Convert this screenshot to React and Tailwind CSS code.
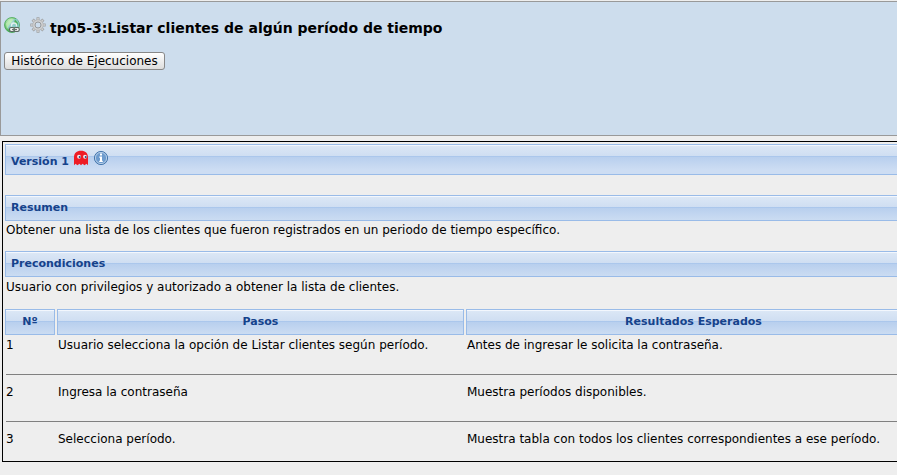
import React from 'react';

const BAR =
  'border border-[#99bbe8] shadow-[inset_0_1px_0_#f3f7fd] text-[11px] font-bold text-[#15428b] whitespace-nowrap';
const BAR_SHORT =
  'h-[26px] leading-6 bg-[linear-gradient(to_bottom,#dfe9f8_0px,#dae6f5_2px,#cfdef2_11px,#abc7ec_11px,#abc7ec_12px,#b8cfee_12px,#cbdcf2_24px)]';
const BAR_TALL =
  'h-[31px] bg-[linear-gradient(to_bottom,#dfe9f8_0px,#dae6f5_2px,#cfdef2_11px,#abc7ec_11px,#abc7ec_12px,#b8cfee_12px,#cdddf3_25px,#cdddf3_29px)]';

const steps = [
  ['1', 'Usuario selecciona la opción de Listar clientes según período.', 'Antes de ingresar le solicita la contraseña.'],
  ['2', 'Ingresa la contraseña', 'Muestra períodos disponibles.'],
  ['3', 'Selecciona período.', 'Muestra tabla con todos los clientes correspondientes a ese período.'],
];

function LinkGlobe() {
  return (
    <svg className="h-4 w-4 shrink-0" viewBox="0 0 16 16">
      <defs>
        <radialGradient id="globe" cx=".4" cy=".3" r=".75">
          <stop offset="0" stopColor="#d9f5d5" />
          <stop offset=".5" stopColor="#83cf80" />
          <stop offset="1" stopColor="#2f9a45" />
        </radialGradient>
      </defs>
      <circle cx="8" cy="8" r="7.5" fill="url(#globe)" stroke="#48a857" strokeWidth=".8" />
      <path d="M8 2.5 13 1.8 15.2 6v4H8L4.5 12 3 9l4-3.500z" fill="#8ec9dd" opacity=".75" />
      <path d="M2 6.500 7 2l3 .5L5.500 8 3 12z" fill="#bdecb7" opacity=".8" />
      <path d="M11 2.500 14 6l-1 3-3-3z" fill="#4eaf57" />
      <path d="M7.500 9.500v-1a2.500 2.500 0 0 1 5 0v1" fill="none" stroke="#e4efef" strokeWidth="1.300" />
      <rect x="5.500" y="10.500" width="5" height="4" rx="1.700" fill="#eee" stroke="#596761" strokeWidth="1.100" />
      <rect x="10" y="10.500" width="5.300" height="4" rx="1.700" fill="#eee" stroke="#596761" strokeWidth="1.100" />
      <path d="M8 12.500h5" stroke="#69736f" strokeWidth="1.200" />
    </svg>
  );
}

function Gear() {
  return (
    <svg className="h-4 w-4 shrink-0" viewBox="0 0 16 16">
      <g stroke="#a0a2a4" strokeWidth="3">
        <path d="M8 .3v15.400M.3 8h15.400M2.600 2.600l10.800 10.800M13.400 2.600 2.600 13.400" />
      </g>
      <g stroke="#d0d1d2" strokeWidth="1.600">
        <path d="M8 1v14M1 8h14M3.100 3.100l9.800 9.800M12.900 3.100l-9.800 9.800" />
      </g>
      <circle cx="8" cy="8" r="5.300" fill="#cfd0d1" stroke="#b0b1b3" strokeWidth=".7" />
      <circle cx="8" cy="8" r="3" fill="#cddded" stroke="#97999b" />
    </svg>
  );
}

function Ghost() {
  return (
    <svg className="h-4 w-4 shrink-0" viewBox="0 0 16 16">
      <path d="M1 15.200V7.500C1 3 3.700.8 8 .8s7 2.200 7 6.700v7.700l-1.500-1.500-2 1.500-2-1.500L8 15.200l-1.600-1.500-1.900 1.500-2-1.500z" fill="#ee1c25" />
      <ellipse cx="6" cy="6.700" rx="1.900" ry="2" fill="#f5e8eb" />
      <ellipse cx="12" cy="6.700" rx="1.900" ry="2" fill="#f5e8eb" />
      <circle cx="6.700" cy="7" r="1" fill="#244c80" />
      <circle cx="12.700" cy="7" r="1" fill="#244c80" />
    </svg>
  );
}

function Info() {
  return (
    <svg className="h-4 w-4 shrink-0" viewBox="0 0 16 16">
      <circle cx="8" cy="8" r="6.600" fill="#6d9bce" stroke="#4677ad" />
      <circle cx="8" cy="8" r="5.600" fill="none" stroke="#bed3e9" strokeWidth=".9" />
      <path d="M7 3.500h2v2H7zM6.300 6.500H9v4.300h.8v1.200H6.200v-1.200H7V7.700h-.7z" fill="#fff" />
    </svg>
  );
}

export default function App() {
  return (
    <div className="h-[475px] w-[897px] overflow-hidden bg-[#eeeeee] pt-px font-['DejaVu_Sans',sans-serif] text-xs text-black">
      <header className="h-[135px] w-[910px] border border-[#999999] bg-[#cddded] pl-[3px]">
        <div className="flex h-[50px] pt-[15px]">
          <LinkGlobe />
          <span className="w-[10px]" />
          <Gear />
          <h1 className="ml-[4px] pt-px text-[14px] leading-5 font-bold whitespace-nowrap">
            tp05-3:Listar clientes de algún período de tiempo
          </h1>
        </div>
        <button className="block h-[18px] w-[161px] rounded-[3px] border border-[#888888] bg-linear-to-b from-white to-[#dddddd] text-center text-xs leading-4 whitespace-nowrap">
          Histórico de Ejecuciones
        </button>
      </header>

      <main className="mt-[5px] ml-[2px] h-[321px] w-[925px] border border-black pt-[2px] pl-[2px]">
        <div className={`flex pl-[5px] ${BAR} ${BAR_TALL}`}>
          <span className="pt-[9px] leading-4">Versión 1</span>
          <span className="ml-[4px] flex gap-[4px] pt-[5px]">
            <Ghost />
            <Info />
          </span>
        </div>

        <div className={`mt-5 pl-[5px] ${BAR} ${BAR_SHORT}`}>Resumen</div>
        <p className="h-[30px] pl-px leading-[18px]">
          Obtener una lista de los clientes que fueron registrados en un periodo de tiempo específico.
        </p>

        <div className={`pl-[5px] ${BAR} ${BAR_SHORT}`}>Precondiciones</div>
        <p className="h-8 pl-px pt-px leading-[18px]">
          Usuario con privilegios y autorizado a obtener la lista de clientes.
        </p>

        <div className="grid grid-cols-[50px_407px_455px] gap-x-[2px] text-center">
          <div className={`${BAR} ${BAR_SHORT}`}>Nº</div>
          <div className={`${BAR} ${BAR_SHORT}`}>Pasos</div>
          <div className={`${BAR} ${BAR_SHORT}`}>Resultados Esperados</div>
        </div>
        {steps.map(([number, action, result], i) => (
          <div
            key={number}
            className={
              i < 2
                ? 'ml-px grid grid-cols-[52px_409px_454px] border-b border-[#808080] whitespace-nowrap ' +
                  (i === 0 ? 'h-10 pt-px' : 'h-[47px] pt-[8px]')
                : 'ml-px grid h-[39px] grid-cols-[52px_409px_454px] pt-[8px] whitespace-nowrap'
            }
          >
            <span className="leading-[18px]">{number}</span>
            <span className="leading-[18px]">{action}</span>
            <span className="leading-[18px]">{result}</span>
          </div>
        ))}
      </main>
    </div>
  );
}
